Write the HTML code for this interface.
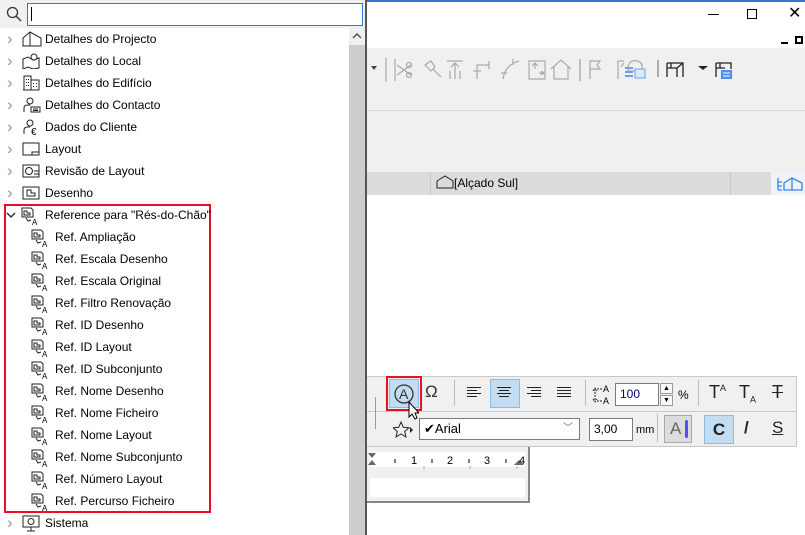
<!DOCTYPE html>
<html><head><meta charset="utf-8"><style>
*{margin:0;padding:0;box-sizing:border-box}
body{width:805px;height:535px;overflow:hidden;background:#fff;font-family:"Liberation Sans","DejaVu Sans",sans-serif;font-size:12px;color:#000;position:relative}
.a{position:absolute}
.row{position:absolute;height:22px;line-height:22px;white-space:nowrap}
.chev{position:absolute;left:7px;top:0;color:#999;font-size:17px;line-height:21px}
.ic{position:absolute;top:3px}
.ri{position:absolute;top:3px;left:31px}
.lbl{position:absolute;left:45px}
.rl{position:absolute;left:55px}
.g{stroke:#aaa;fill:none;stroke-width:1.2}
</style></head><body>
<div class="a" style="left:365px;top:0;width:440px;height:2px;background:#2b7bd6"></div>
<div class="a" style="left:708px;top:14px;width:11px;height:1px;background:#000"></div>
<div class="a" style="left:747px;top:9px;width:10px;height:10px;border:1px solid #000"></div>
<div class="a" style="left:788px;top:6px;font-size:16px;line-height:16px">✕</div>
<div class="a" style="left:781px;top:42px;width:7px;height:2px;background:#000"></div>
<div class="a" style="left:795px;top:36px;width:8px;height:8px;border:2px solid #000"></div>
<div class="a" style="left:365px;top:48px;width:440px;height:124px;background:#f0f0f0"></div>
<div class="a" style="left:365px;top:110px;width:440px;height:1px;background:#d8d8d8"></div>
<div class="a" style="left:365px;top:172px;width:440px;height:23px;background:#dcdcdc"></div>
<div class="a" style="left:430px;top:172px;width:1px;height:23px;background:#c8c8c8"></div>
<div class="a" style="left:730px;top:172px;width:1px;height:23px;background:#c8c8c8"></div>
<div class="a" style="left:771px;top:172px;width:34px;height:23px;background:#eef3fa"></div>
<div class="a" style="left:436px;top:175px;line-height:17px;font-size:12px">
<svg width="18" height="14" style="vertical-align:-2px"><path d="M1 6 L9 1 L17 6 V13 H1 Z" fill="none" stroke="#222"/></svg>[Alçado Sul]</div>
<svg class="a" style="left:776px;top:176px" width="29" height="16"><path d="M2 2 V14 M2 6 H6 M2 10 H6 M2 14 H6 M8 14 V7 L16 2 L26 7 V14 Z M16 2 V14" stroke="#3a85e0" fill="none" stroke-width="1.3"/></svg>
<svg class="a" style="left:365px;top:55px" width="440" height="30">
<path d="M6 11 L12 11 L9 15 Z" fill="#444"/>
<path d="M21 3 V27" stroke="#999"/>
<g class="g"><path d="M30 4 V26 M32 10 L46 20 M32 20 L46 10"/><circle cx="44" cy="10" r="2.5"/><circle cx="44" cy="20" r="2.5"/>
<path d="M60 10 L66 6 L70 12 L66 16 Z M68 14 L76 22"/>
<path d="M82 6 H98 M90 22 V8 M86 12 L90 8 L94 12 M85 24 V16 M90 24 V18 M95 24 V16"/>
<path d="M112 24 V10 H124 M108 16 H116 M124 6 V14"/>
<path d="M138 24 Q140 10 154 6 M148 4 V10 M136 18 H142"/>
<path d="M164 6 H180 V24 H164 Z M170 8 V14 M167 11 L170 8 L173 11 M174 18 H179 M176 16 L179 18 L176 20"/>
<path d="M186 14 L196 5 L206 14 M189 12 V24 H203 V12"/>
<path d="M215 4 V26" stroke="#999"/>
<path d="M225 24 V6 H235 L232 10 L235 14 H225"/>
<path d="M253 24 V6 H259 M259 8 L256 12"/>
<path d="M263 12 q2-8 9-6 q6 1 5 8 v2 H263 Z"/>
</g>
<rect x="260" y="12" width="8" height="2" fill="#6aa0e8"/><rect x="260" y="16" width="8" height="2" fill="#6aa0e8"/><rect x="260" y="20" width="8" height="2" fill="#6aa0e8"/>
<rect x="270" y="14" width="10" height="9" fill="#dde9fb" stroke="#6aa0e8"/>
<path d="M293 5 V22" stroke="#666"/>
<path d="M302 8 H318 V22 M302 8 V22 M302 13 H312 V22 M306 8 V13 M318 8 L312 13" stroke="#222" fill="none" stroke-width="1.3"/>
<path d="M333 11 H343 L338 15 Z" fill="#222"/>
<path d="M351 8 H366 V14 M351 8 V22 M351 13 H360 M355 8 V13" stroke="#222" fill="none" stroke-width="1.3"/>
<rect x="356" y="15" width="11" height="9" fill="#4a8ff0"/><path d="M358 18 H365 M358 21 H365" stroke="#fff"/>
</svg>
<div class="a" style="left:365px;top:376px;width:432px;height:71px;background:#f0f0f0;border:1px solid #c8c8c8"></div>
<div class="a" style="left:365px;top:411px;width:432px;height:1px;background:#c8c8c8"></div>
<div class="a" style="left:375px;top:397px;width:1px;height:32px;background:#999"></div>
<div class="a" style="left:389px;top:379px;width:30px;height:29px;background:#c2dcf2;border:1px solid #8bbce6"></div>
<div class="a" style="left:386px;top:376px;width:36px;height:35px;border:2px solid #e81123"></div>
<svg class="a" style="left:389px;top:379px" width="30" height="42"><circle cx="15" cy="15" r="9" fill="none" stroke="#333" stroke-width="1.3"/><text x="10" y="20" font-size="14" font-family="Liberation Sans" fill="#333">A</text>
<path d="M20 23 V38 L23 35 L26 40 L28 39 L26 34 L30 34 Z" fill="#fff" stroke="#000"/></svg>
<div class="a" style="left:425px;top:382px;font-size:17px;color:#333">Ω</div>
<div class="a" style="left:454px;top:380px;width:1px;height:26px;background:#bbb"></div>
<div class="a" style="left:490px;top:379px;width:30px;height:29px;background:#c2dcf2;border:1px solid #8bbce6"></div>
<svg class="a" style="left:465px;top:386px" width="110" height="14"><g stroke="#222"><path d="M2 1.5H16M2 4.5H12M2 7.5H16M2 10.5H12"/><path d="M32 1.5H46M34 4.5H44M32 7.5H46M34 10.5H44"/><path d="M62 1.5H76M66 4.5H76M62 7.5H76M66 10.5H76"/><path d="M92 1.5H106M92 4.5H106M92 7.5H106M92 10.5H106"/></g></svg>
<div class="a" style="left:585px;top:380px;width:1px;height:26px;background:#bbb"></div>
<svg class="a" style="left:591px;top:383px" width="22" height="22"><path d="M4 6V18M2 8L4 5L6 8M2 16L4 19L6 16M6 6H11M6 18H11" stroke="#222" fill="none" stroke-dasharray="2 1"/><text x="12" y="9" font-size="9" font-family="Liberation Sans">A</text><text x="12" y="21" font-size="9" font-family="Liberation Sans">A</text></svg>
<div class="a" style="left:615px;top:383px;width:44px;height:23px;background:#fff;border:1px solid #7a7a7a;padding-left:4px;line-height:21px;color:#000080">100</div>
<div class="a" style="left:660px;top:383px;width:13px;height:11px;border:1px solid #999;background:#f8f8f8;font-size:7px;text-align:center;line-height:9px">▲</div>
<div class="a" style="left:660px;top:395px;width:13px;height:11px;border:1px solid #999;background:#f8f8f8;font-size:7px;text-align:center;line-height:9px">▼</div>
<div class="a" style="left:678px;top:388px;font-size:12px">%</div>
<div class="a" style="left:698px;top:380px;width:1px;height:26px;background:#bbb"></div>
<div class="a" style="left:709px;top:382px;font-size:18px;color:#222">T<sup style="font-size:9px">A</sup></div>
<div class="a" style="left:739px;top:382px;font-size:18px;color:#222">T<sub style="font-size:9px">A</sub></div>
<div class="a" style="left:772px;top:382px;font-size:18px;color:#222;text-decoration:line-through">T</div>
<svg class="a" style="left:393px;top:421px" width="20" height="18"><path d="M8 1L10.3 6.3L16 6.8L11.7 10.5L13 16L8 13L3 16L4.3 10.5L0 6.8L5.7 6.3Z" fill="none" stroke="#222"/><path d="M17 6L20 9L17 12Z" fill="#222"/></svg>
<div class="a" style="left:419px;top:418px;width:161px;height:22px;background:#fff;border:1px solid #7a7a7a;line-height:20px;padding-left:4px;font-size:13px">✔Arial<span style="position:absolute;right:6px;top:0;color:#666;font-size:10px">﹀</span></div>
<div class="a" style="left:589px;top:418px;width:44px;height:23px;background:#fff;border:1px solid #7a7a7a;line-height:21px;padding-left:4px">3,00</div>
<div class="a" style="left:636px;top:424px;font-size:11px">mm</div>
<div class="a" style="left:657px;top:414px;width:1px;height:28px;background:#bbb"></div>
<div class="a" style="left:664px;top:415px;width:28px;height:28px;background:#dcdcdc;border:1px solid #aaa;font-size:17px;color:#666;padding-left:5px;line-height:26px">A</div>
<div class="a" style="left:685px;top:420px;width:3px;height:18px;background:#5050ff;border-radius:2px"></div>
<div class="a" style="left:704px;top:415px;width:30px;height:29px;background:#c2dcf2;border:1px solid #8bbce6;font-weight:bold;font-size:17px;text-align:center;line-height:27px;color:#222">C</div>
<div class="a" style="left:744px;top:418px;font-size:17px;font-weight:bold;color:#222">/</div>
<div class="a" style="left:772px;top:418px;font-size:17px;text-decoration:underline;color:#222">S</div>
<div class="a" style="left:366px;top:447px;width:164px;height:56px;background:#f0f0f0;border-right:2px solid #888;border-bottom:2px solid #888"></div>
<div class="a" style="left:370px;top:452px;width:155px;height:15px;background:#fff"></div>
<div class="a" style="left:370px;top:478px;width:155px;height:19px;background:#fff"></div>
<svg class="a" style="left:366px;top:452px" width="164" height="22"><path d="M2 1H10L6 6Z M2 13H10L6 8Z" fill="#666"/><path d="M148 13H158L153 8Z" fill="#666"/>
<g stroke="#000"><path d="M29 7V11M66 7V11M103 7V11M140 7V11"/></g><g stroke="#aaa"><path d="M58 14V17M104 14V17M151 14V17"/></g>
<g font-size="11" font-family="Liberation Sans"><text x="45" y="12">1</text><text x="81" y="12">2</text><text x="118" y="12">3</text><text x="153" y="12">4</text></g></svg>
<div class="a" style="left:0;top:0;width:365px;height:535px;background:#fff"></div>
<div class="a" style="left:365px;top:0;width:2px;height:535px;background:#555"></div>
<div class="a" style="left:0;top:0;width:365px;height:28px;background:#f0f0f0"></div>
<svg class="a" style="left:6px;top:6px" width="16" height="16"><circle cx="6.5" cy="6.5" r="5" fill="none" stroke="#333" stroke-width="1.3"/><path d="M10 10L15 15" stroke="#333" stroke-width="1.4"/></svg>
<div class="a" style="left:27px;top:3px;width:336px;height:23px;border:1px solid #2b7bd6;background:#fff"></div>
<div class="a" style="left:31px;top:7px;width:1px;height:14px;background:#000"></div>
<div class="a" style="left:349px;top:28px;width:16px;height:507px;background:#f0f0f0"></div>
<div class="a" style="left:349px;top:45px;width:16px;height:490px;background:#cdcdcd"></div>
<svg class="a" style="left:352px;top:32px" width="10" height="8"><path d="M1 6L5 2L9 6" stroke="#555" stroke-width="1.5" fill="none"/></svg>
<div class="a" style="left:4px;top:204px;width:207px;height:309px;border:2px solid #e81123"></div>
<div class="row" style="top:28px;left:0"><span class="chev">›</span><svg class="ic" style="left:22px" width="20" height="16"><path d="M1 7L8 1L19 7V15H1Z M8 1V15" fill="none" stroke="#222"/></svg><span class="lbl">Detalhes do Projecto</span></div>
<div class="row" style="top:50px;left:0"><span class="chev">›</span><svg class="ic" style="left:22px" width="20" height="16"><path d="M1 6L6 4L11 7L17 5V15L11 16L6 14L1 16Z" fill="none" stroke="#222"/><circle cx="12" cy="4" r="3" fill="#fff" stroke="#222"/></svg><span class="lbl">Detalhes do Local</span></div>
<div class="row" style="top:72px;left:0"><span class="chev">›</span><svg class="ic" style="left:22px" width="20" height="16"><path d="M2 15V1H9V15M9 5H17V15H1" fill="none" stroke="#222"/><path d="M4 4h1v1h-1zM6 4h1v1h-1zM4 7h1v1h-1zM6 7h1v1h-1zM4 10h1v1h-1zM6 10h1v1h-1zM11 8h1v1h-1zM14 8h1v1h-1zM11 11h1v1h-1zM14 11h1v1h-1z" fill="#222"/></svg><span class="lbl">Detalhes do Edifício</span></div>
<div class="row" style="top:94px;left:0"><span class="chev">›</span><svg class="ic" style="left:22px" width="20" height="16"><circle cx="8" cy="4" r="3" fill="none" stroke="#222"/><path d="M2 15V11Q2 8 6 8H8M9 10H18V15H9Z M11 12H16M11 13.5H16" fill="none" stroke="#222"/></svg><span class="lbl">Detalhes do Contacto</span></div>
<div class="row" style="top:116px;left:0"><span class="chev">›</span><svg class="ic" style="left:22px" width="20" height="16"><circle cx="8" cy="4" r="3" fill="none" stroke="#222"/><path d="M2 15V11Q2 8 6 8H8" fill="none" stroke="#222"/><text x="9" y="16" font-size="10" font-family="Liberation Sans">€</text></svg><span class="lbl">Dados do Cliente</span></div>
<div class="row" style="top:138px;left:0"><span class="chev">›</span><svg class="ic" style="left:22px" width="20" height="16"><path d="M1 2H17V14H1Z M10 14V11H17" fill="none" stroke="#222"/></svg><span class="lbl">Layout</span></div>
<div class="row" style="top:160px;left:0"><span class="chev">›</span><svg class="ic" style="left:22px" width="20" height="16"><path d="M1 2H17V14H1Z M12 8H17M12 11H17" fill="none" stroke="#222"/><circle cx="7" cy="8" r="3.5" fill="none" stroke="#222"/></svg><span class="lbl">Revisão de Layout</span></div>
<div class="row" style="top:182px;left:0"><span class="chev">›</span><svg class="ic" style="left:22px" width="20" height="16"><path d="M1 2H17V14H1Z M5 11V5H9V8H13V11Z" fill="none" stroke="#222"/></svg><span class="lbl">Desenho</span></div>
<div class="row" style="top:204px;left:0"><svg class="a" style="left:6px;top:8px" width="10" height="7"><path d="M1 1L5 5L9 1" stroke="#333" stroke-width="1.5" fill="none"/></svg><svg class="ic" style="left:21px" width="18" height="18"><path d="M1 1H10L12 3V10H1Z M3 8V4H6V6H9V8Z M5 11L7 14L10 13" fill="none" stroke="#222"/><text x="11" y="18" font-size="8" font-family="Liberation Sans">A</text></svg><span class="lbl">Reference para "Rés-do-Chão"</span></div>
<div class="row" style="top:226px"><svg class="ri" width="18" height="18"><path d="M1 1H10L12 3V10H1Z M3 8V4H6V6H9V8Z M5 11L7 14L10 13" fill="none" stroke="#222"/><text x="11" y="18" font-size="8" font-family="Liberation Sans">A</text></svg><span class="rl">Ref. Ampliação</span></div>
<div class="row" style="top:248px"><svg class="ri" width="18" height="18"><path d="M1 1H10L12 3V10H1Z M3 8V4H6V6H9V8Z M5 11L7 14L10 13" fill="none" stroke="#222"/><text x="11" y="18" font-size="8" font-family="Liberation Sans">A</text></svg><span class="rl">Ref. Escala Desenho</span></div>
<div class="row" style="top:270px"><svg class="ri" width="18" height="18"><path d="M1 1H10L12 3V10H1Z M3 8V4H6V6H9V8Z M5 11L7 14L10 13" fill="none" stroke="#222"/><text x="11" y="18" font-size="8" font-family="Liberation Sans">A</text></svg><span class="rl">Ref. Escala Original</span></div>
<div class="row" style="top:292px"><svg class="ri" width="18" height="18"><path d="M1 1H10L12 3V10H1Z M3 8V4H6V6H9V8Z M5 11L7 14L10 13" fill="none" stroke="#222"/><text x="11" y="18" font-size="8" font-family="Liberation Sans">A</text></svg><span class="rl">Ref. Filtro Renovação</span></div>
<div class="row" style="top:314px"><svg class="ri" width="18" height="18"><path d="M1 1H10L12 3V10H1Z M3 8V4H6V6H9V8Z M5 11L7 14L10 13" fill="none" stroke="#222"/><text x="11" y="18" font-size="8" font-family="Liberation Sans">A</text></svg><span class="rl">Ref. ID Desenho</span></div>
<div class="row" style="top:336px"><svg class="ri" width="18" height="18"><path d="M1 1H10L12 3V10H1Z M3 8V4H6V6H9V8Z M5 11L7 14L10 13" fill="none" stroke="#222"/><text x="11" y="18" font-size="8" font-family="Liberation Sans">A</text></svg><span class="rl">Ref. ID Layout</span></div>
<div class="row" style="top:358px"><svg class="ri" width="18" height="18"><path d="M1 1H10L12 3V10H1Z M3 8V4H6V6H9V8Z M5 11L7 14L10 13" fill="none" stroke="#222"/><text x="11" y="18" font-size="8" font-family="Liberation Sans">A</text></svg><span class="rl">Ref. ID Subconjunto</span></div>
<div class="row" style="top:380px"><svg class="ri" width="18" height="18"><path d="M1 1H10L12 3V10H1Z M3 8V4H6V6H9V8Z M5 11L7 14L10 13" fill="none" stroke="#222"/><text x="11" y="18" font-size="8" font-family="Liberation Sans">A</text></svg><span class="rl">Ref. Nome Desenho</span></div>
<div class="row" style="top:402px"><svg class="ri" width="18" height="18"><path d="M1 1H10L12 3V10H1Z M3 8V4H6V6H9V8Z M5 11L7 14L10 13" fill="none" stroke="#222"/><text x="11" y="18" font-size="8" font-family="Liberation Sans">A</text></svg><span class="rl">Ref. Nome Ficheiro</span></div>
<div class="row" style="top:424px"><svg class="ri" width="18" height="18"><path d="M1 1H10L12 3V10H1Z M3 8V4H6V6H9V8Z M5 11L7 14L10 13" fill="none" stroke="#222"/><text x="11" y="18" font-size="8" font-family="Liberation Sans">A</text></svg><span class="rl">Ref. Nome Layout</span></div>
<div class="row" style="top:446px"><svg class="ri" width="18" height="18"><path d="M1 1H10L12 3V10H1Z M3 8V4H6V6H9V8Z M5 11L7 14L10 13" fill="none" stroke="#222"/><text x="11" y="18" font-size="8" font-family="Liberation Sans">A</text></svg><span class="rl">Ref. Nome Subconjunto</span></div>
<div class="row" style="top:468px"><svg class="ri" width="18" height="18"><path d="M1 1H10L12 3V10H1Z M3 8V4H6V6H9V8Z M5 11L7 14L10 13" fill="none" stroke="#222"/><text x="11" y="18" font-size="8" font-family="Liberation Sans">A</text></svg><span class="rl">Ref. Número Layout</span></div>
<div class="row" style="top:490px"><svg class="ri" width="18" height="18"><path d="M1 1H10L12 3V10H1Z M3 8V4H6V6H9V8Z M5 11L7 14L10 13" fill="none" stroke="#222"/><text x="11" y="18" font-size="8" font-family="Liberation Sans">A</text></svg><span class="rl">Ref. Percurso Ficheiro</span></div>
<div class="row" style="top:512px;left:0"><span class="chev">›</span><svg class="ic" style="left:22px" width="20" height="18"><path d="M1 1H17V12H1Z M9 12V16M5 16H13" fill="none" stroke="#222"/><circle cx="9" cy="6.5" r="3" fill="none" stroke="#222"/></svg><span class="lbl">Sistema</span></div>
</body></html>
